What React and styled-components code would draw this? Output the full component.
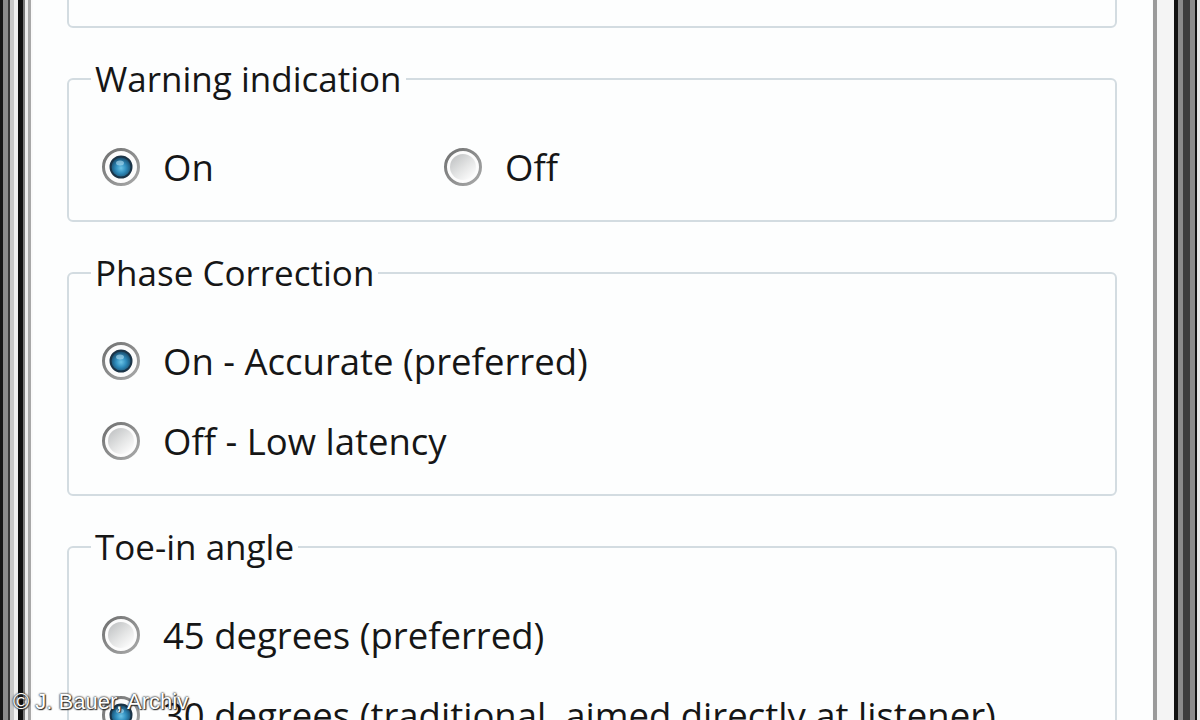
import React from "react";
import styled, { createGlobalStyle } from "styled-components";

const Global = createGlobalStyle`
  html, body { margin: 0; padding: 0; background: #fdfefe; }
  body { width: 1200px; height: 720px; overflow: hidden; }
`;

const Page = styled.div`
  display: flex;
  width: 1200px;
  height: 720px;
  overflow: hidden;
  position: relative;
  font-family: "Open Sans", "Noto Sans", sans-serif;
  color: #161616;
`;

const LeftFrame = styled.div`
  flex: 0 0 33px;
  background: linear-gradient(
    to right,
    #151515 0 3px,
    #8a8a8a 3px 8px,
    #3a3a3a 8px 10px,
    #c8c8c8 10px 14px,
    #f0f0f0 14px 18px,
    #101010 18px 23px,
    #7a7a7a 23px 25px,
    #ececec 25px 28px,
    #a8a8a8 28px 31px,
    #fafafa 31px 33px
  );
`;

const RightFrame = styled.div`
  flex: 0 0 48px;
  background: linear-gradient(
    to right,
    #fbfbfb 0 1px,
    #9a9a9a 1px 5px,
    #f4f4f4 5px 22px,
    #121212 22px 26px,
    #8a8a8a 26px 31px,
    #3c3c3c 31px 38px,
    #8c8c8c 38px 43px,
    #111111 43px 45px,
    #e8e8e8 45px 48px
  );
`;

const Panel = styled.div`
  flex: 1;
  background: #fdfefe;
  padding: 0 35px 0 34px;
  display: flex;
  flex-direction: column;
  gap: 50px;
  overflow: hidden;
`;

const GroupBox = styled.div`
  flex: 0 0 auto;
  border: 2px solid #d3dce1;
  border-radius: 6px;
  display: flex;
  flex-direction: column;
  padding: 0 0 13px 32px;
  ${(p) => (p.$clipped ? "height: 100px; margin-top: -72px; box-sizing: border-box;" : "")}
`;

const Legend = styled.div`
  align-self: flex-start;
  margin: -21px 0 0 -10px;
  padding: 0 4px;
  background: #fdfefe;
  font-size: 35px;
  line-height: 40px;
  white-space: nowrap;
`;

const Rows = styled.div`
  display: flex;
  flex-direction: column;
  margin-top: 28px;
`;

const Row = styled.div`
  display: flex;
  align-items: center;
  height: 80px;
`;

const Option = styled.div`
  display: flex;
  align-items: center;
  gap: 22px;
  ${(p) => (p.$width ? `width: ${p.$width}px;` : "")}
  font-size: 36.5px;
  line-height: 40px;
  white-space: nowrap;
`;

const Watermark = styled.div`
  position: absolute;
  left: 13px;
  bottom: 6px;
  font-family: "Liberation Sans", Arial, sans-serif;
  font-size: 22px;
  line-height: 24px;
  color: #ffffff;
  text-shadow: 0 0 2px #222, 0 0 2px #222, 1px 1px 1px #333;
  white-space: nowrap;
`;

let gid = 0;
function Radio({ checked }) {
  const id = React.useMemo(() => `r${gid++}`, []);
  return (
    <svg width="40" height="40" viewBox="0 0 40 40" style={{ flex: "0 0 auto" }}>
      <defs>
        <linearGradient id={`${id}ring`} x1="0" y1="0" x2="1" y2="1">
          <stop offset="0" stopColor="#6f7070" />
          <stop offset="1" stopColor="#a9aaaa" />
        </linearGradient>
        <linearGradient id={`${id}off`} x1="0.15" y1="0.1" x2="0.85" y2="0.9">
          <stop offset="0" stopColor="#c4c6c7" />
          <stop offset="0.55" stopColor="#e4e5e5" />
          <stop offset="1" stopColor="#fbfbfb" />
        </linearGradient>
        <radialGradient id={`${id}dot`} cx="0.5" cy="0.55" r="0.55">
          <stop offset="0" stopColor="#6cc4e6" />
          <stop offset="0.45" stopColor="#2f8dbd" />
          <stop offset="1" stopColor="#143f5c" />
        </radialGradient>
      </defs>
      <circle cx="20" cy="20" r="17.5" fill="#fcfcfc" stroke={`url(#${id}ring)`} strokeWidth="3" />
      {checked ? (
        <>
          <circle cx="20" cy="20" r="10.5" fill={`url(#${id}dot)`} stroke="#1b3447" strokeWidth="2" />
          <ellipse cx="19" cy="16" rx="4" ry="2.5" fill="#bfe6f5" opacity="0.55" />
        </>
      ) : (
        <circle cx="20" cy="20" r="13" fill={`url(#${id}off)`} />
      )}
    </svg>
  );
}

function Choice({ checked, children, width }) {
  return (
    <Option $width={width}>
      <Radio checked={checked} />
      <span>{children}</span>
    </Option>
  );
}

export default function App() {
  return (
    <>
      <Global />
      <Page>
        <LeftFrame />
        <Panel>
          <GroupBox $clipped />
          <GroupBox>
            <Legend>Warning indication</Legend>
            <Rows>
              <Row>
                <Choice checked width={342}>On</Choice>
                <Choice>Off</Choice>
              </Row>
            </Rows>
          </GroupBox>
          <GroupBox>
            <Legend>Phase Correction</Legend>
            <Rows>
              <Row>
                <Choice checked>On - Accurate (preferred)</Choice>
              </Row>
              <Row>
                <Choice>Off - Low latency</Choice>
              </Row>
            </Rows>
          </GroupBox>
          <GroupBox>
            <Legend>Toe-in angle</Legend>
            <Rows>
              <Row>
                <Choice>45 degrees (preferred)</Choice>
              </Row>
              <Row>
                <Choice checked>30 degrees (traditional, aimed directly at listener)</Choice>
              </Row>
            </Rows>
          </GroupBox>
        </Panel>
        <RightFrame />
        <Watermark>© J. Bauer, Archiv</Watermark>
      </Page>
    </>
  );
}
